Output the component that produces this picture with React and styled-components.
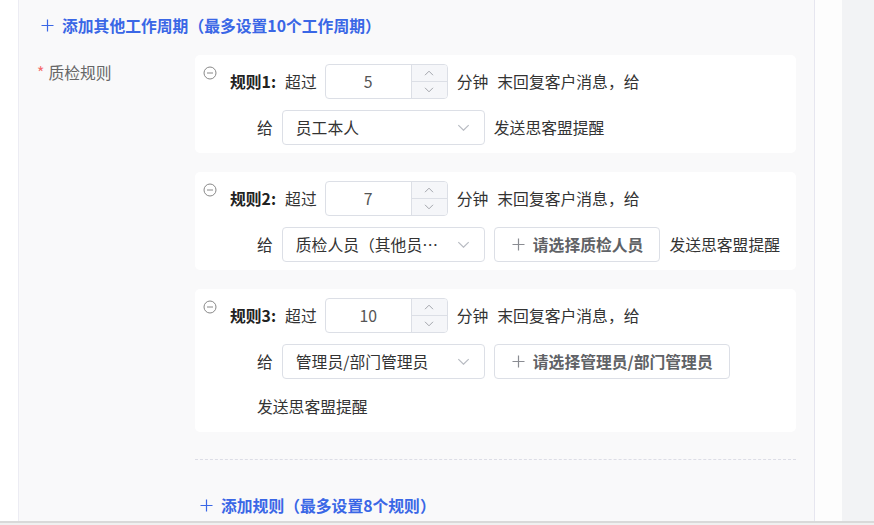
import React from 'react';
import styled, { createGlobalStyle } from 'styled-components';

const GlobalStyle = createGlobalStyle`
  html, body {
    margin: 0;
    padding: 0;
    background: #ffffff;
    overflow: hidden;
  }
  body {
    font-family: "Noto Sans CJK SC", "Noto Sans", "Liberation Sans", sans-serif;
    font-size: 15.8px;
    color: #333;
  }
`;

const Screen = styled.div`
  width: 874px;
  height: 525px;
  display: flex;
  flex-direction: column;
  overflow: hidden;
`;

const Main = styled.div`
  flex: 1;
  display: flex;
  min-height: 0;
`;

const LeftGutter = styled.div`
  width: 18px;
  background: #fff;
`;

const Panel = styled.div`
  width: 795px;
  background: #f9f9fa;
  border-left: 1px solid #ececf3;
  border-right: 1px solid #e6e6ef;
  overflow: hidden;
`;

const WhiteGap = styled.div`
  width: 27px;
  background: #fdfdfd;
`;

const GreySide = styled.div`
  flex: 1;
  background: #f2f3f5;
`;

const BottomBar = styled.div`
  height: 4px;
  border-top: 2px solid #d9d9d9;
  background: #f0f0f0;
  box-sizing: border-box;
`;

const LinkButton = styled.div`
  display: flex;
  align-items: center;
  gap: 8px;
  height: ${p => p.$h || 50}px;
  padding-left: ${p => p.$left || 0}px;
  color: #3a67e6;
  font-weight: 600;
  font-size: 15.8px;
  white-space: nowrap;
`;

const FormItem = styled.div`
  display: flex;
  margin-top: 5px;
`;

const Label = styled.div`
  width: 176px;
  flex-shrink: 0;
  box-sizing: border-box;
  padding-left: 18px;
  line-height: 36px;
  color: #666;
  white-space: nowrap;
`;

const Star = styled.span`
  color: #f56c6c;
  margin-right: 4px;
`;

const Rules = styled.div`
  width: 601px;
  display: flex;
  flex-direction: column;
`;

const Card = styled.div`
  background: #fff;
  border-radius: 5px;
  padding: 9px 8px 8px 8px;
  margin-bottom: 19px;
  display: flex;
  flex-direction: column;
  gap: 11px;
`;

const Row = styled.div`
  display: flex;
  align-items: center;
  gap: 9px;
  height: 35px;
  position: relative;
  padding-left: 27px;
`;

const RemoveIcon = styled.svg`
  position: absolute;
  left: 0;
  top: 2px;
`;

const RuleTitle = styled.span`
  font-weight: 700;
  color: #222;
`;

const Text = styled.span`
  white-space: nowrap;
  line-height: 35px;
`;

const SecondRow = styled.div`
  display: flex;
  flex-wrap: wrap;
  align-items: center;
  column-gap: 9px;
  row-gap: 10px;
  padding-left: 54px;
`;

const NumberBox = styled.div`
  width: 123px;
  height: 35px;
  box-sizing: border-box;
  border: 1px solid #dcdfe6;
  border-radius: 4px;
  display: flex;
  overflow: hidden;
  margin-left: -1px;
`;

const NumberValue = styled.div`
  flex: 1;
  display: flex;
  align-items: center;
  justify-content: center;
  color: #555;
`;

const Stepper = styled.div`
  width: 35px;
  border-left: 1px solid #dcdfe6;
  background: #f5f6f9;
  display: flex;
  flex-direction: column;
`;

const StepHalf = styled.div`
  flex: 1;
  display: flex;
  align-items: center;
  justify-content: center;
  border-top: ${p => (p.$bottom ? '1px solid #dcdfe6' : 'none')};
`;

const Select = styled.div`
  width: 203px;
  height: 35px;
  box-sizing: border-box;
  border: 1px solid #dcdfe6;
  border-radius: 4px;
  display: flex;
  align-items: center;
  padding: 0 14px 0 13px;
  background: #fff;
`;

const SelectText = styled.span`
  flex: 1;
  min-width: 0;
  margin-right: 12px;
  white-space: nowrap;
  overflow: hidden;
  text-overflow: ellipsis;
  color: #333;
`;

const PickButton = styled.div`
  height: 35px;
  box-sizing: border-box;
  border: 1px solid #dcdfe6;
  border-radius: 4px;
  display: flex;
  align-items: center;
  gap: 8px;
  padding: 0 16px 0 17px;
  color: #606266;
  font-weight: 600;
  white-space: nowrap;
`;

const Divider = styled.div`
  margin-top: 8px;
  border-top: 1px dashed #dcdde6;
`;

const Plus = ({ color = '#3a67e6' }) => (
  <svg width="13" height="13" viewBox="0 0 13 13">
    <path d="M6.5 0.5v12M0.5 6.5h12" stroke={color} strokeWidth="1.2" fill="none" />
  </svg>
);

const Chevron = ({ up, size = 10, color = '#9a9ca3' }) => (
  <svg width={size} height={size * 0.6} viewBox="0 0 10 6">
    <path
      d={up ? 'M1 5.2L5 1.2L9 5.2' : 'M1 0.8L5 4.8L9 0.8'}
      stroke={color}
      strokeWidth="0.9"
      fill="none"
    />
  </svg>
);

const Minus = () => (
  <RemoveIcon width="14" height="14" viewBox="0 0 14 14">
    <circle cx="7" cy="7" r="6" stroke="#888" strokeWidth="1" fill="none" />
    <path d="M4 7h6" stroke="#888" strokeWidth="1" />
  </RemoveIcon>
);

const rules = [
  { n: 1, value: '5', who: '员工本人' },
  { n: 2, value: '7', who: '质检人员（其他员工）', pick: '请选择质检人员' },
  { n: 3, value: '10', who: '管理员/部门管理员', pick: '请选择管理员/部门管理员' },
];

const RuleCard = ({ rule }) => (
  <Card>
    <Row>
      <Minus />
      <RuleTitle>规则{rule.n}:</RuleTitle>
      <Text>超过</Text>
      <NumberBox>
        <NumberValue>{rule.value}</NumberValue>
        <Stepper>
          <StepHalf>
            <Chevron up />
          </StepHalf>
          <StepHalf $bottom>
            <Chevron />
          </StepHalf>
        </Stepper>
      </NumberBox>
      <Text>分钟</Text>
      <Text>末回复客户消息，给</Text>
    </Row>
    <SecondRow>
      <Text>给</Text>
      <Select>
        <SelectText>{rule.who}</SelectText>
        <Chevron size={13} color="#b8bbc2" />
      </Select>
      {rule.pick && (
        <PickButton>
          <Plus color="#8a8c92" />
          {rule.pick}
        </PickButton>
      )}
      <Text>发送思客盟提醒</Text>
    </SecondRow>
  </Card>
);

const App = () => (
  <>
    <GlobalStyle />
    <Screen>
      <Main>
        <LeftGutter />
        <Panel>
          <LinkButton $left={22}>
            <Plus />
            添加其他工作周期（最多设置10个工作周期）
          </LinkButton>
          <FormItem>
            <Label>
              <Star>*</Star>质检规则
            </Label>
            <Rules>
              {rules.map(r => (
                <RuleCard key={r.n} rule={r} />
              ))}
              <Divider />
              <LinkButton $left={5} $h={90}>
                <Plus />
                添加规则（最多设置8个规则）
              </LinkButton>
            </Rules>
          </FormItem>
        </Panel>
        <WhiteGap />
        <GreySide />
      </Main>
      <BottomBar />
    </Screen>
  </>
);

export default App;
